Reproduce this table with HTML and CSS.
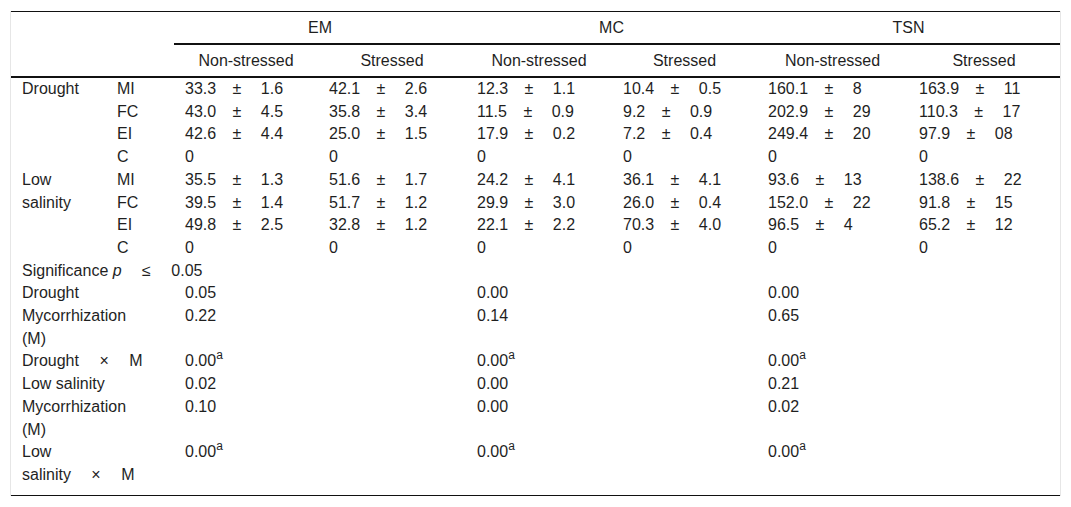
FILE: index.html
```html
<!DOCTYPE html>
<html lang="en">
<head>
<meta charset="utf-8">
<title>Table</title>
<link rel="stylesheet" href="styles.css">
</head>
<body>
<div class="wrap">
<table class="data">
<colgroup>
<col class="c-lab"><col class="c-sub"><col class="c-emn"><col class="c-ems"><col class="c-mcn"><col class="c-mcs"><col class="c-tsn"><col class="c-tss">
</colgroup>
<thead>
<tr class="h1">
<th colspan="2" rowspan="2" class="blank"></th>
<th colspan="2" class="grp">EM</th>
<th colspan="2" class="grp">MC</th>
<th colspan="2" class="grp">TSN</th>
</tr>
<tr class="h2">
<th>Non-stressed</th><th>Stressed</th>
<th>Non-stressed</th><th>Stressed</th>
<th>Non-stressed</th><th>Stressed</th>
</tr>
</thead>
<tbody>
<tr>
<td rowspan="4">Drought</td><td>MI</td>
<td>33.3 <span class="pm">±</span> 1.6</td><td>42.1 <span class="pm">±</span> 2.6</td>
<td>12.3 <span class="pm">±</span> 1.1</td><td>10.4 <span class="pm">±</span> 0.5</td>
<td>160.1 <span class="pm">±</span> 8</td><td>163.9 <span class="pm">±</span> 11</td>
</tr>
<tr>
<td>FC</td>
<td>43.0 <span class="pm">±</span> 4.5</td><td>35.8 <span class="pm">±</span> 3.4</td>
<td>11.5 <span class="pm">±</span> 0.9</td><td>9.2 <span class="pm">±</span> 0.9</td>
<td>202.9 <span class="pm">±</span> 29</td><td>110.3 <span class="pm">±</span> 17</td>
</tr>
<tr>
<td>EI</td>
<td>42.6 <span class="pm">±</span> 4.4</td><td>25.0 <span class="pm">±</span> 1.5</td>
<td>17.9 <span class="pm">±</span> 0.2</td><td>7.2 <span class="pm">±</span> 0.4</td>
<td>249.4 <span class="pm">±</span> 20</td><td>97.9 <span class="pm">±</span> 08</td>
</tr>
<tr>
<td>C</td>
<td>0</td><td>0</td><td>0</td><td>0</td><td>0</td><td>0</td>
</tr>
<tr>
<td rowspan="4">Low salinity</td><td>MI</td>
<td>35.5 <span class="pm">±</span> 1.3</td><td>51.6 <span class="pm">±</span> 1.7</td>
<td>24.2 <span class="pm">±</span> 4.1</td><td>36.1 <span class="pm">±</span> 4.1</td>
<td>93.6 <span class="pm">±</span> 13</td><td>138.6 <span class="pm">±</span> 22</td>
</tr>
<tr>
<td>FC</td>
<td>39.5 <span class="pm">±</span> 1.4</td><td>51.7 <span class="pm">±</span> 1.2</td>
<td>29.9 <span class="pm">±</span> 3.0</td><td>26.0 <span class="pm">±</span> 0.4</td>
<td>152.0 <span class="pm">±</span> 22</td><td>91.8 <span class="pm">±</span> 15</td>
</tr>
<tr>
<td>EI</td>
<td>49.8 <span class="pm">±</span> 2.5</td><td>32.8 <span class="pm">±</span> 1.2</td>
<td>22.1 <span class="pm">±</span> 2.2</td><td>70.3 <span class="pm">±</span> 4.0</td>
<td>96.5 <span class="pm">±</span> 4</td><td>65.2 <span class="pm">±</span> 12</td>
</tr>
<tr>
<td>C</td>
<td>0</td><td>0</td><td>0</td><td>0</td><td>0</td><td>0</td>
</tr>
<tr>
<td colspan="8">Significance <i>p</i> <span class="op">≤</span> 0.05</td>
</tr>
<tr>
<td colspan="2">Drought</td><td colspan="2">0.05</td><td colspan="2">0.00</td><td colspan="2">0.00</td>
</tr>
<tr>
<td colspan="2">Mycorrhization<br>(M)</td><td colspan="2">0.22</td><td colspan="2">0.14</td><td colspan="2">0.65</td>
</tr>
<tr>
<td colspan="2">Drought <span class="op">×</span> M</td><td colspan="2">0.00<sup>a</sup></td><td colspan="2">0.00<sup>a</sup></td><td colspan="2">0.00<sup>a</sup></td>
</tr>
<tr>
<td colspan="2">Low salinity</td><td colspan="2">0.02</td><td colspan="2">0.00</td><td colspan="2">0.21</td>
</tr>
<tr>
<td colspan="2">Mycorrhization<br>(M)</td><td colspan="2">0.10</td><td colspan="2">0.00</td><td colspan="2">0.02</td>
</tr>
<tr class="last">
<td colspan="2">Low<br>salinity <span class="op">×</span> M</td><td colspan="2">0.00<sup>a</sup></td><td colspan="2">0.00<sup>a</sup></td><td colspan="2">0.00<sup>a</sup></td>
</tr>
</tbody>
</table>
</div>
</body>
</html>
```

FILE: styles.css
```css
html, body {
  margin: 0;
  padding: 0;
  background: #ffffff;
}

body {
  font-family: "Liberation Sans", Arial, sans-serif;
  font-size: 16px;
  color: #1f1f1f;
}

.wrap {
  margin: 11px 10px 0 10px;
  border-left: 1px solid #e6e6e6;
  border-right: 1px solid #e6e6e6;
}

.data {
  width: 100%;
  table-layout: fixed;
  border-collapse: separate;
  border-spacing: 0;
  border-top: 1px solid #111111;
  border-bottom: 1px solid #111111;
}

.c-lab { width: 95px; }
.c-sub { width: 68px; }
.c-emn { width: 144px; }
.c-ems { width: 148px; }
.c-mcn { width: 146px; }
.c-mcs { width: 145px; }
.c-tsn { width: 151px; }
.c-tss { width: 152px; }

.data th {
  font-weight: normal;
  text-align: center;
  vertical-align: middle;
  line-height: 19px;
  padding: 6px 11px;
}

.data .grp {
  border-bottom: 2px solid #111111;
}

.data .h2 th,
.data .blank {
  border-bottom: 2px solid #111111;
}

.data td {
  text-align: left;
  vertical-align: top;
  line-height: 22.7px;
  padding: 0 11px;
  white-space: normal;
}

.data .last td {
  padding-bottom: 8px;
}

.pm {
  margin: 0 15px 0 12px;
}

.op {
  margin: 0 16px;
}

sup {
  font-size: 12px;
  line-height: 0;
  vertical-align: 7px;
}
```
